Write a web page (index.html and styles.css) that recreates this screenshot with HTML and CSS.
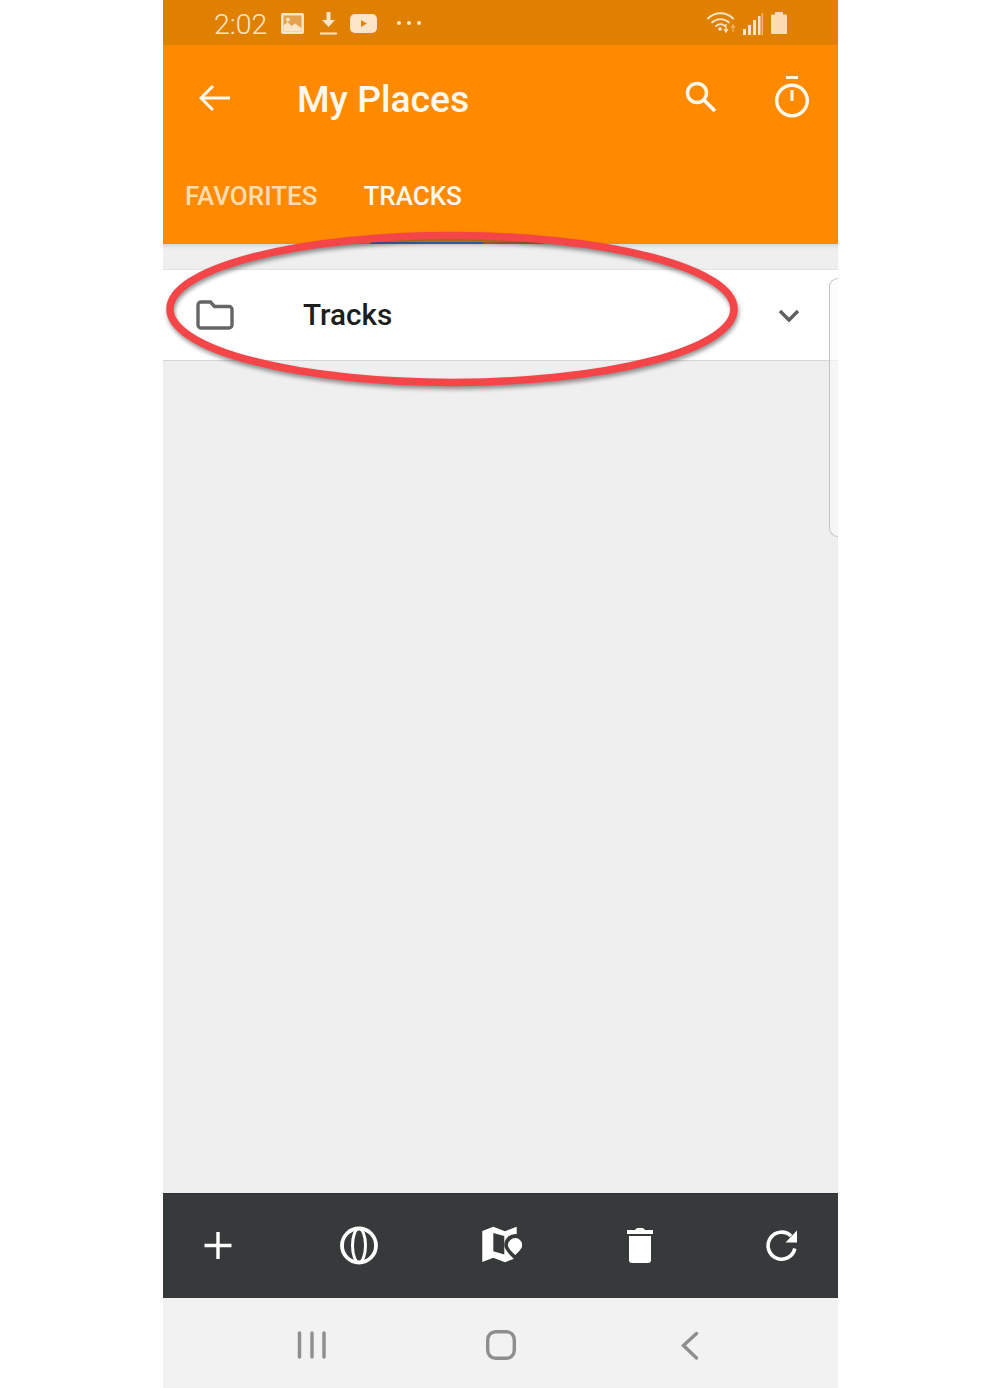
FILE: index.html
```html
<!DOCTYPE html>
<html lang="en">
<head>
<meta charset="utf-8">
<title>My Places</title>
<link rel="stylesheet" href="styles.css">
</head>
<body>
<main class="phone">
  <header class="status">
    <span class="clock">2:02</span>
    <svg class="s-img" viewBox="0 0 23 21"><rect width="23" height="21" rx="2" fill="#fbe5c8"/><rect x="2.500" y="2.500" width="18" height="16" fill="#e5a24e"/><path d="M2.500 18.500v-6l4-3.500 4 4 3.500-2.500 6.500 4.500v3.500z" fill="#fbe5c8"/><circle cx="7" cy="6.500" r="2" fill="#fbe5c8"/></svg>
    <svg class="s-dl" viewBox="0 0 17 23"><path d="M6.500 0h4v8h4.500l-6.500 7-6.500-7h4.500z" fill="#fbe5c8"/><rect y="20.500" width="17" height="2" fill="#fbe5c8"/></svg>
    <svg class="s-yt" viewBox="0 0 27 19"><rect width="27" height="19" rx="5" fill="#fbe5c8"/><path d="M11 6l6 3.500-6 3.500z" fill="#dd8410"/></svg>
    <svg class="s-dots" viewBox="0 0 24 4"><circle cx="2" cy="2" r="2" fill="#fbe5c8"/><circle cx="12" cy="2" r="2" fill="#fbe5c8"/><circle cx="22" cy="2" r="2" fill="#fbe5c8"/></svg>
    <span class="spacer"></span>
    <svg class="s-wifi" viewBox="0 0 30 22"><g fill="none" stroke="#fbe5c8" stroke-width="1.800" stroke-linecap="round"><path d="M1 6.500c7-7 18-7 25 0"/><path d="M5 10.500c5-4.500 12-4.500 17 0"/><path d="M9 14c3-2.500 6-2.500 9 0"/></g><circle cx="13" cy="17" r="1.800" fill="#fbe5c8"/><path d="M19 12v7M17 17l2 3 2-3" fill="none" stroke="#fbe5c8" stroke-width="1.300"/><path d="M26 20v-6M24 16l2-3 2 3" fill="none" stroke="#f0b36a" stroke-width="1.300"/></svg>
    <svg class="s-sig" viewBox="0 0 20 22"><g fill="#fbe5c8"><rect y="16" width="3" height="6"/><rect x="5" y="12" width="3" height="10"/><rect x="10" y="7" width="3" height="15"/><rect x="15" y="3" width="2.500" height="19"/></g><rect x="18.600" width="1.400" height="22" fill="#eeb672"/></svg>
    <svg class="s-bat" viewBox="0 0 16 22"><path d="M4 0h8v2.500h3a1 1 0 0 1 1 1V21a1 1 0 0 1-1 1H1a1 1 0 0 1-1-1V3.500a1 1 0 0 1 1-1h3z" fill="#fbdcb4"/></svg>
  </header>

  <section class="appbar">
    <div class="titlebar">
      <svg class="back" viewBox="0 0 34 28"><path d="M32 14H3M15 2 3 14l12 12" fill="none" stroke="#fff8ee" stroke-width="3"/></svg>
      <h1 class="title">My Places</h1>
      <span class="spacer"></span>
      <svg class="search" viewBox="0 0 32 32"><circle cx="12" cy="12" r="9.500" fill="none" stroke="#fff8ee" stroke-width="3.400"/><path d="M19 19l11 11" stroke="#fff8ee" stroke-width="3.800"/></svg>
      <svg class="timer" viewBox="0 0 34 42"><rect x="11" y="0" width="12" height="3" fill="#fff2e0"/><circle cx="17" cy="24.500" r="15.300" fill="none" stroke="#fff8ee" stroke-width="3.400"/><rect x="15.500" y="14" width="3" height="11" fill="#fff8ee"/></svg>
    </div>
    <nav class="tabs">
      <span class="tab tab-muted">FAVORITES</span>
      <span class="tab">TRACKS</span>
    </nav>
  </section>
  <div class="progress"><span class="progress-blue"></span><span class="progress-brown"></span></div>

  <section class="content">
    <div class="row">
      <svg class="folder" viewBox="0 0 38 30"><path d="M2 5a3 3 0 0 1 3-3h9.500l4 4.500H33a3 3 0 0 1 3 3V25a3 3 0 0 1-3 3H5a3 3 0 0 1-3-3z" fill="none" stroke="#666" stroke-width="3.400"/></svg>
      <span class="row-label">Tracks</span>
      <span class="spacer"></span>
      <svg class="chev" viewBox="0 0 22 14"><path d="M2 2l9 9 9-9" fill="none" stroke="#5f5f5f" stroke-width="3.400"/></svg>
    </div>
    <div class="side-handle"></div>
  </section>

  <section class="toolbar">
    <svg class="tool" viewBox="0 0 44 44"><path d="M22 9v27M8.500 22.500h27" stroke="#fff" stroke-width="3.400"/></svg>
    <svg class="tool" viewBox="0 0 44 44"><g fill="none" stroke="#fff"><circle cx="22" cy="22.500" r="17" stroke-width="3.800"/><ellipse cx="22" cy="22.500" rx="6.500" ry="17" stroke-width="3"/></g></svg>
    <svg class="tool" viewBox="0 0 44 44"><path d="M4.300 8 15.300 3.800 27 8.200 38.700 3.800V34.800L27 39.200 15.300 34.800 4.300 39z" fill="#fff"/><path d="M15.300 10 26.300 13V31.500L15.300 28.200z" fill="#373a3b"/><path d="M37.300 11a11 11 0 0 1 11 11c0 6-11 15-11 15s-11-9-11-15a11 11 0 0 1 11-11z" fill="#373a3b"/><path d="M37.300 15a7.300 7.300 0 0 1 7 7.300c0 3.700-7 9.700-7 9.700s-7.300-6-7.300-9.700a7.300 7.300 0 0 1 7.300-7.300z" fill="#fff"/></svg>
    <svg class="tool" viewBox="0 0 44 44"><path d="M9 7h8l2-2h6l2 2h8v4H9zM11 13h22v24a3 3 0 0 1-3 3H14a3 3 0 0 1-3-3z" fill="#fff"/></svg>
    <svg class="tool" viewBox="0 0 44 44"><path d="M32 13a13.500 13.500 0 1 0 3.800 12.500" fill="none" stroke="#fff" stroke-width="3.600"/><path d="M38 7.500v12H26.500z" fill="#fff"/></svg>
  </section>

  <footer class="navbar">
    <svg class="navicon" viewBox="0 0 40 40"><path d="M7.500 8v24M20 8v24M32 8v24" stroke="#8e8e8e" stroke-width="3.400" stroke-linecap="round"/></svg>
    <svg class="navicon" viewBox="0 0 40 40"><rect x="6.700" y="6.700" width="26.600" height="26.600" rx="8" fill="none" stroke="#8e8e8e" stroke-width="3.400"/></svg>
    <svg class="navicon" viewBox="0 0 40 40"><path d="M26.500 8.500 13.500 20.500 26.500 33" fill="none" stroke="#8e8e8e" stroke-width="3.400" stroke-linecap="round"/></svg>
  </footer>

  <svg class="annotation" viewBox="0 0 590 170"><ellipse cx="289" cy="82" rx="282" ry="73.500" fill="none" stroke="#f44649" stroke-width="7.500"/></svg>
</main>
</body>
</html>
```
FILE: styles.css
```css
* { box-sizing: border-box; }

html, body {
  margin: 0;
  background: #fff;
}

.phone {
  position: relative;
  width: 675px;
  height: 1388px;
  margin-left: 163px;
  display: flex;
  flex-direction: column;
  overflow: hidden;
  background: #efefef;
  font-family: Roboto, "Liberation Sans", sans-serif;
}

.spacer { flex: 1; }

.status {
  height: 45px;
  flex: none;
  display: flex;
  align-items: center;
  padding-left: 51px;
  padding-right: 51px;
  background: #e08000;
}

.clock {
  width: 67px;
  margin-top: 4px;
  font-size: 28.500px;
  font-weight: 300;
  line-height: 34px;
  color: #fbe5c8;
}

.s-img { width: 23px; height: 21px; margin-top: 2px; }
.s-dl { width: 17px; height: 23px; margin-left: 16px; margin-top: 2px; }
.s-yt { width: 27px; height: 19px; margin-left: 13px; margin-top: 2px; }
.s-dots { width: 24px; height: 4px; margin-left: 20px; margin-top: 1px; }
.s-wifi { width: 30px; height: 22px; margin-top: 1px; }
.s-sig { width: 20px; height: 22px; margin-left: 6px; margin-top: 2px; }
.s-bat { width: 16px; height: 22px; margin-left: 8px; margin-top: 1px; }

.appbar {
  height: 199px;
  flex: none;
  display: flex;
  flex-direction: column;
  background: #ff8a00;
}

.titlebar {
  height: 108px;
  display: flex;
  align-items: center;
  padding-left: 35px;
  padding-right: 29px;
}

.back { width: 34px; height: 28px; margin-bottom: 3px; }

.title {
  margin: 0 0 0 65px;
  font-size: 37.300px;
  font-weight: 500;
  line-height: 44px;
  color: #fff8ee;
}

.search { width: 32px; height: 32px; margin-bottom: 4px; }
.timer { width: 34px; height: 42px; margin-left: 58px; margin-bottom: 5px; }

.tabs {
  display: flex;
  gap: 46px;
  padding-left: 22px;
  padding-top: 28px;
}

.tab {
  font-size: 26px;
  font-weight: 500;
  line-height: 30px;
  color: #fff8ee;
}

.tab-muted { color: #fddcb0; }

.progress {
  height: 2px;
  flex: none;
  margin-top: -2px;
  position: relative;
  display: flex;
  padding-left: 207px;
}

.progress-blue { width: 113px; background: #2a5fc4; }
.progress-brown { width: 60px; background: #b4651a; }

.content {
  flex: 1;
  position: relative;
  padding-top: 25px;
  background: #efefef;
  box-shadow: inset 0 5px 4px -3px #d4d4d4;
}

.row {
  height: 92px;
  display: flex;
  align-items: center;
  padding-left: 33px;
  padding-right: 38px;
  background: #fff;
  border-top: 1px solid #e2e2e2;
  border-bottom: 1.500px solid #d6d6d6;
}

.folder { width: 38px; height: 30px; }

.row-label {
  margin-left: 69px;
  font-size: 29.700px;
  font-weight: 500;
  line-height: 36px;
  color: #1d1d1d;
}

.chev { width: 22px; height: 14px; margin-top: 2px; }

.side-handle {
  position: absolute;
  top: 34px;
  left: 666px;
  width: 12px;
  height: 259px;
  border: 1.500px solid #c4c4c4;
  border-right: 0;
  border-radius: 9px 0 0 9px;
  background: rgba(250, 250, 250, 0.6);
}

.toolbar {
  height: 105px;
  flex: none;
  display: flex;
  align-items: center;
  justify-content: space-between;
  padding-left: 33px;
  padding-right: 35px;
  background: #373a3b;
  border-top: 1px solid #2c2e2f;
}

.tool { width: 44px; height: 44px; margin-bottom: 3px; overflow: hidden; }

.navbar {
  height: 90px;
  flex: none;
  display: flex;
  align-items: center;
  justify-content: center;
  gap: 149px;
  padding-top: 4px;
  background: #f2f2f2;
}

.navicon { width: 40px; height: 40px; }

.annotation {
  position: absolute;
  left: 0;
  top: 227px;
  width: 590px;
  height: 170px;
  overflow: visible;
  filter: drop-shadow(1px 3px 2px rgba(60, 60, 60, 0.55));
}
```
